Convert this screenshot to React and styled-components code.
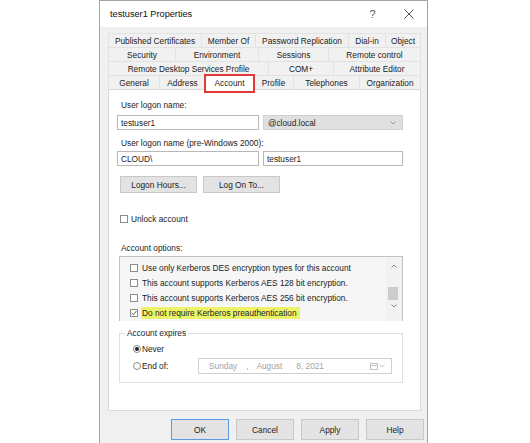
import React from 'react';
import styled, { createGlobalStyle } from 'styled-components';

const GlobalStyle = createGlobalStyle`
  html, body {
    margin: 0;
    background: #ffffff;
  }
  body {
    font-family: "Liberation Sans", Arial, sans-serif;
    font-size: 8.3px;
    color: #222222;
  }
`;

const Window = styled.div`
  box-sizing: border-box;
  margin-left: 99px;
  width: 329px;
  height: 443px;
  border: 1px solid #a3a3a3;
  border-bottom: none;
  background: #f0f0f0;
  display: flex;
  flex-direction: column;
`;

const TitleBar = styled.div`
  height: 26px;
  background: #ffffff;
  display: flex;
  align-items: center;
  padding-left: 10px;
`;

const TitleText = styled.div`
  font-size: 9.2px;
  color: #111;
`;

const TitleButtons = styled.div`
  margin-left: auto;
  display: flex;
  align-items: center;
`;

const HelpGlyph = styled.span`
  width: 37px;
  font-size: 11px;
  color: #555;
  text-align: center;
`;

const CloseButton = styled.span`
  width: 36px;
  display: flex;
  justify-content: center;
`;

const TabStrip = styled.div`
  margin: 6px 6px 0 8px;
  display: flex;
  flex-direction: column;
`;

const TabRow = styled.div`
  display: flex;
  height: 14px;
`;

const Tab = styled.div`
  box-sizing: border-box;
  position: relative;
  width: ${({ w }) => w}px;
  height: 100%;
  display: flex;
  align-items: center;
  justify-content: center;
  white-space: nowrap;
  border-top: 1px solid #e2e2e2;
  border-left: 1px solid #e2e2e2;
  background: #f1f1f1;
  &:last-child {
    border-right: 1px solid #e2e2e2;
  }
  ${({ active }) => active && `
    background: #ffffff;
    height: calc(100% + 2px);
    margin-top: -1px;
    z-index: 2;
    &::after {
      content: '';
      position: absolute;
      inset: -1px -2px -3px -2px;
      border: 2px solid #e23a3a;
    }
  `}
`;

const Panel = styled.div`
  box-sizing: border-box;
  margin: 0 6px 0 8px;
  height: 322px;
  background: #ffffff;
  border: 1px solid #d9d9d9;
  padding: 9px 17px 0 8px;
  display: flex;
  flex-direction: column;
`;

const Label = styled.div`
  margin-left: 4px;
  line-height: 12px;
  margin-top: ${({ mt = 0 }) => mt}px;
`;

const FieldRow = styled.div`
  display: flex;
  gap: 4px;
  margin-top: ${({ mt = 0 }) => mt}px;
`;

const TextInput = styled.div`
  box-sizing: border-box;
  width: 142px;
  height: 15px;
  border: 1px solid #b8b8b8;
  background: #ffffff;
  padding-left: 3px;
  display: flex;
  align-items: center;
  ${({ grow }) => grow && 'flex: 1;'}
`;

const Select = styled.div`
  box-sizing: border-box;
  flex: 1;
  height: 15px;
  border: 1px solid #d0d0d0;
  background: #e0e0e0;
  padding: 0 6px 0 4px;
  display: flex;
  align-items: center;
  justify-content: space-between;
`;

const ButtonRow = styled.div`
  display: flex;
  gap: 6px;
  margin: 10px 0 0 3px;
`;

const Button = styled.div`
  box-sizing: border-box;
  width: ${({ w }) => w}px;
  height: ${({ h }) => h}px;
  border: 1px solid ${({ primary }) => (primary ? '#5b9be0' : '#c8c8c8')};
  background: #e3e3e3;
  display: flex;
  align-items: center;
  justify-content: center;
`;

const CheckRow = styled.div`
  display: flex;
  align-items: center;
  gap: 2px;
  height: 12px;
  margin: ${({ mt = 0 }) => mt}px 0 0 ${({ ml = 0 }) => ml}px;
`;

const Box = styled.span`
  box-sizing: border-box;
  width: 8px;
  height: 8px;
  border: 1px solid #8c8c8c;
  background: #ffffff;
  display: flex;
  align-items: center;
  justify-content: center;
  margin-right: 1px;
`;

const ListBox = styled.div`
  box-sizing: border-box;
  margin: 2px 0 0 2px;
  height: 65px;
  border: 1px solid #c2c2c2;
  border-bottom: none;
  background: #f6f6f6;
  display: flex;
`;

const ListItems = styled.div`
  flex: 1;
  padding: 3px 0 0 10px;
`;

const ListItem = styled.div`
  height: 15px;
  display: flex;
  align-items: center;
  gap: 3px;
`;

const Highlight = styled.span`
  background: #eef266;
  padding: 1px 3px 1px 1px;
  margin-left: -1px;
`;

const ScrollBar = styled.div`
  width: 16px;
  display: flex;
  flex-direction: column;
  align-items: center;
  background: #f2f2f2;
  padding-top: 7px;
`;

const Thumb = styled.div`
  width: 10px;
  height: 13px;
  background: #cdcdcd;
  margin: 19px 0 4px -2px;
`;

const GroupBox = styled.fieldset`
  margin: 6px 0 0 2px;
  padding: 0 0 8px 13px;
  border: 1px solid #e0e0e0;
  min-width: 0;
`;

const Legend = styled.legend`
  padding: 0 2px;
  margin-left: -8px;
  line-height: 12px;
`;

const RadioRow = styled.div`
  display: flex;
  align-items: center;
  height: ${({ h = 12 }) => h}px;
  margin-top: ${({ mt = 0 }) => mt}px;
`;

const RadioLabel = styled.div`
  width: 65px;
  display: flex;
  align-items: center;
  gap: 1px;
`;

const Radio = styled.span`
  box-sizing: border-box;
  width: 8px;
  height: 8px;
  border-radius: 50%;
  border: 1px solid #8a8a8a;
  background: #fff;
  display: flex;
  align-items: center;
  justify-content: center;
  &::after {
    content: '';
    width: 4px;
    height: 4px;
    border-radius: 50%;
    background: ${({ checked }) => (checked ? '#222' : 'transparent')};
  }
`;

const DatePicker = styled.div`
  box-sizing: border-box;
  width: 194px;
  height: 16px;
  border: 1px solid #cfcfcf;
  background: #fff;
  color: #a2a2a2;
  display: flex;
  align-items: center;
  padding-left: 10px;
`;

const DatePart = styled.span`
  margin-left: ${({ ml = 0 }) => ml}px;
`;

const CalIcon = styled.span`
  margin-left: auto;
  margin-right: 6px;
  display: flex;
  align-items: center;
  gap: 1px;
`;

const DialogButtons = styled.div`
  display: flex;
  justify-content: flex-end;
  gap: 7px;
  margin: 8px 3px 0 0;
`;

const Chevron = ({ up, color = '#888' }) => (
  <svg width="6" height="4" viewBox="0 0 6 4">
    <polyline
      points={up ? '0.5,3.5 3,1 5.5,3.5' : '0.5,0.5 3,3 5.5,0.5'}
      fill="none"
      stroke={color}
      strokeWidth="1"
    />
  </svg>
);

const Check = () => (
  <svg width="6" height="6" viewBox="0 0 6 6">
    <polyline points="0.7,3 2.4,4.7 5.4,1" fill="none" stroke="#555" strokeWidth="1" />
  </svg>
);

const tabRows = [
  [['Published Certificates', 93], ['Member Of', 54], ['Password Replication', 93], ['Dial-in', 37], ['Object', 36]],
  [['Security', 67], ['Environment', 83], ['Sessions', 70], ['Remote control', 93]],
  [['Remote Desktop Services Profile', 160], ['COM+', 65], ['Attribute Editor', 88]],
  [['General', 51], ['Address', 46], ['Account', 48, true], ['Profile', 40], ['Telephones', 66], ['Organization', 62]],
];

const options = [
  ['Use only Kerberos DES encryption types for this account', false],
  ['This account supports Kerberos AES 128 bit encryption.', false],
  ['This account supports Kerberos AES 256 bit encryption.', false],
  ['Do not require Kerberos preauthentication', true],
];

export default function App() {
  return (
    <>
      <GlobalStyle />
      <Window>
        <TitleBar>
          <TitleText>testuser1 Properties</TitleText>
          <TitleButtons>
            <HelpGlyph>?</HelpGlyph>
            <CloseButton>
              <svg width="10" height="10" viewBox="0 0 10 10">
                <path d="M0.5 0.5 L9.5 9.5 M9.5 0.5 L0.5 9.5" stroke="#555" strokeWidth="1" />
              </svg>
            </CloseButton>
          </TitleButtons>
        </TitleBar>

        <TabStrip>
          {tabRows.map((row, i) => (
            <TabRow key={i}>
              {row.map(([name, w, active]) => (
                <Tab key={name} w={w} active={active}>{name}</Tab>
              ))}
            </TabRow>
          ))}
        </TabStrip>

        <Panel>
          <Label>User logon name:</Label>
          <FieldRow mt={4}>
            <TextInput>testuser1</TextInput>
            <Select>
              <span>@cloud.local</span>
              <Chevron color="#999" />
            </Select>
          </FieldRow>

          <Label mt={7}>User logon name (pre-Windows 2000):</Label>
          <FieldRow mt={2}>
            <TextInput>CLOUD\</TextInput>
            <TextInput grow>testuser1</TextInput>
          </FieldRow>

          <ButtonRow>
            <Button w={77} h={17}>Logon Hours...</Button>
            <Button w={77} h={17}>Log On To...</Button>
          </ButtonRow>

          <CheckRow mt={20} ml={3}>
            <Box />
            <span>Unlock account</span>
          </CheckRow>

          <Label mt={17}>Account options:</Label>
          <ListBox>
            <ListItems>
              {options.map(([text, checked]) => (
                <ListItem key={text}>
                  <Box>{checked && <Check />}</Box>
                  {checked ? <Highlight>{text}</Highlight> : <span>{text}</span>}
                </ListItem>
              ))}
            </ListItems>
            <ScrollBar>
              <Chevron up />
              <Thumb />
              <Chevron />
            </ScrollBar>
          </ListBox>

          <GroupBox>
            <Legend>Account expires</Legend>
            <RadioRow mt={4}>
              <RadioLabel>
                <Radio checked />
                <span>Never</span>
              </RadioLabel>
            </RadioRow>
            <RadioRow h={16} mt={3}>
              <RadioLabel>
                <Radio />
                <span>End of:</span>
              </RadioLabel>
              <DatePicker>
                <DatePart>Sunday</DatePart>
                <DatePart ml={9}>,</DatePart>
                <DatePart ml={8}>August</DatePart>
                <DatePart ml={14}>8, 2021</DatePart>
                <CalIcon>
                  <svg width="8" height="8" viewBox="0 0 8 8">
                    <rect x="0.5" y="1.5" width="7" height="6" fill="none" stroke="#c4c4c4" />
                    <line x1="0.5" y1="3.5" x2="7.5" y2="3.5" stroke="#c4c4c4" />
                  </svg>
                  <Chevron color="#c4c4c4" />
                </CalIcon>
              </DatePicker>
            </RadioRow>
          </GroupBox>
        </Panel>

        <DialogButtons>
          <Button w={58} h={21} primary>OK</Button>
          <Button w={58} h={21}>Cancel</Button>
          <Button w={58} h={21}>Apply</Button>
          <Button w={58} h={21}>Help</Button>
        </DialogButtons>
      </Window>
    </>
  );
}
